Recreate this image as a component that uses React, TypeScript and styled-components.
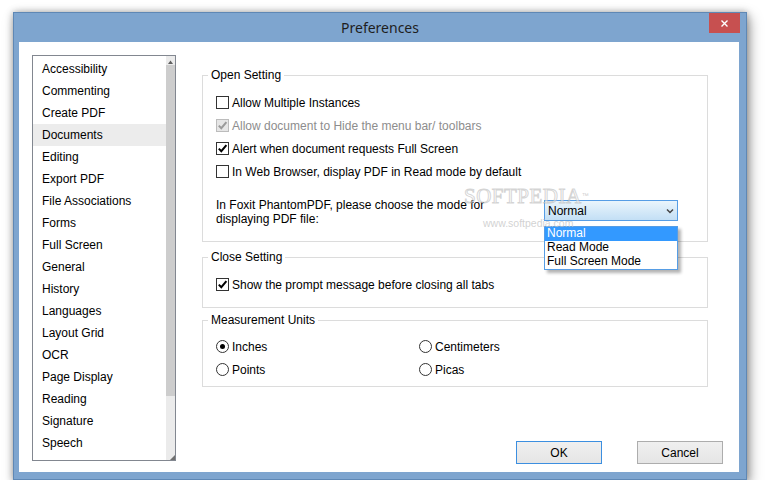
import React from "react";
import styled, { createGlobalStyle } from "styled-components";

const Global = createGlobalStyle`
  html, body { margin: 0; padding: 0; background: #ffffff; }
  body {
    font-family: "Liberation Sans", Arial, sans-serif;
    font-size: 12px;
    color: #000;
  }
  * { box-sizing: border-box; }
`;

const Window = styled.div`
  position: relative;
  margin: 12px 0 0 13px;
  width: 734px;
  height: 468px;
  border: 1px solid #5f88b5;
  background: #7ea5cf;
  padding: 0 7px 7px 5px;
  display: flex;
  flex-direction: column;
  box-shadow: 0 0 7px rgba(0, 0, 0, 0.3), 3px 5px 12px rgba(0, 0, 0, 0.35);
`;

const TitleBar = styled.div`
  position: relative;
  height: 29px;
  margin: 0 -7px 0 -5px;
  display: flex;
  align-items: center;
  justify-content: center;
  font-family: "Noto Sans", "Open Sans", sans-serif;
  font-size: 14px;
  color: #1e1e1e;
`;

const CloseButton = styled.div`
  position: absolute;
  top: 0;
  right: 6px;
  width: 31px;
  height: 20px;
  background: #c75050;
  display: flex;
  align-items: center;
  justify-content: center;
`;

const Client = styled.div`
  position: relative;
  flex: 1;
  background: #ffffff;
  display: grid;
  grid-template-columns: 144px 1fr;
  grid-template-rows: 1fr auto;
  column-gap: 26px;
  padding: 13px 16px 8px 13px;
`;

const ListBox = styled.div`
  grid-row: 1 / 3;
  align-self: start;
  height: 406px;
  border: 1px solid #828790;
  display: flex;
`;

const Items = styled.ul`
  flex: 1;
  margin: 0;
  padding: 2px 0 0;
  list-style: none;
`;

const Item = styled.li<{ $selected?: boolean }>`
  height: 22px;
  line-height: 22px;
  padding-left: 9px;
  white-space: nowrap;
  background: ${(p) => (p.$selected ? "#ececec" : "transparent")};
`;

const ScrollTrack = styled.div`
  width: 9px;
  background: #ebebeb;
  display: flex;
  flex-direction: column;
`;

const ScrollCap = styled.div`
  height: 8px;
  display: flex;
  align-items: flex-end;
  justify-content: center;
`;

const ScrollThumb = styled.div`
  height: 331px;
  margin-top: 1px;
  background: #cdcdcd;
`;

const ScrollGrip = styled.div`
  margin-top: auto;
  height: 8px;
  display: flex;
  align-items: flex-end;
  justify-content: flex-end;
`;

const Panel = styled.div`
  padding-top: 12px;
  display: flex;
  flex-direction: column;
`;

const Group = styled.fieldset<{ $mt?: number }>`
  margin: ${(p) => p.$mt ?? 0}px 0 0 0;
  width: 506px;
  min-width: 0;
  padding: 0;
  border: 1px solid #dcdcdc;
`;

const Legend = styled.legend`
  margin-left: 5px;
  padding: 0 3px;
  line-height: 16px;
  font-size: 12px;
  color: #000;
`;

const GroupBody = styled.div<{ $pt: number; $pb: number }>`
  padding: ${(p) => p.$pt}px 0 ${(p) => p.$pb}px 13px;
  position: relative;
`;

const CheckRow = styled.div<{ $disabled?: boolean }>`
  display: flex;
  align-items: center;
  gap: 3px;
  height: 23px;
  white-space: nowrap;
  color: ${(p) => (p.$disabled ? "#8d8d8d" : "#000")};
`;

const Box = styled.span<{ $disabled?: boolean }>`
  width: 13px;
  height: 13px;
  border: 1px solid ${(p) => (p.$disabled ? "#bcbcbc" : "#333333")};
  background: ${(p) => (p.$disabled ? "#e6e6e6" : "#ffffff")};
  display: flex;
  align-items: center;
  justify-content: center;
  flex: none;
`;

const RadioGrid = styled.div`
  display: grid;
  grid-template-columns: 203px auto;
`;

const Circle = styled.span`
  width: 13px;
  height: 13px;
  border: 1px solid #333333;
  border-radius: 50%;
  background: #ffffff;
  display: flex;
  align-items: center;
  justify-content: center;
  flex: none;
`;

const Dot = styled.span`
  width: 5px;
  height: 5px;
  border-radius: 50%;
  background: #000;
`;

const PromptRow = styled.div`
  display: flex;
  margin-top: 15px;
`;

const PromptText = styled.div`
  width: 328px;
  line-height: 14px;
`;

const SelectWrap = styled.div`
  position: relative;
  width: 134px;
  margin-top: 2px;
`;

const SelectBox = styled.div`
  height: 21px;
  border: 1px solid #569de5;
  background: linear-gradient(#eaf5fc, #c3dff5);
  display: flex;
  align-items: center;
  justify-content: space-between;
  padding: 0 3px 0 3px;
`;

const DropList = styled.ul`
  position: absolute;
  top: 100%;
  left: 0;
  width: 134px;
  margin: 0;
  padding: 0;
  list-style: none;
  background: #ffffff;
  border: 1px solid #569de5;
  box-shadow: 3px 3px 3px rgba(0, 0, 0, 0.3);
  z-index: 2;
`;

const DropItem = styled.li<{ $active?: boolean }>`
  height: 14px;
  line-height: 12px;
  padding-left: 2px;
  white-space: nowrap;
  background: ${(p) => (p.$active ? "#3399ff" : "transparent")};
  color: ${(p) => (p.$active ? "#ffffff" : "#000")};
`;

const ButtonRow = styled.div`
  grid-column: 2;
  display: flex;
  justify-content: flex-end;
  gap: 35px;
`;

const Button = styled.button<{ $default?: boolean }>`
  width: 86px;
  height: 23px;
  padding: 0;
  border: 1px solid ${(p) => (p.$default ? "#3c8fe0" : "#adadad")};
  background: linear-gradient(#f0f0f0, #e5e5e5);
  font-family: "Liberation Sans", Arial, sans-serif;
  font-size: 12px;
  color: #000;
`;

const Watermark = styled.div`
  position: absolute;
  left: 445px;
  top: 143px;
  pointer-events: none;
  z-index: 3;
  display: flex;
  flex-direction: column;
`;

const WmBig = styled.div`
  font-family: "Liberation Serif", serif;
  font-size: 21px;
  line-height: 22px;
  letter-spacing: 0.5px;
  color: rgba(255, 255, 255, 0.5);
  -webkit-text-stroke: 1px rgba(170, 170, 170, 0.5);
`;

const WmTm = styled.sup`
  font-family: "Liberation Sans", sans-serif;
  font-size: 7px;
  color: rgba(170, 170, 170, 0.6);
  -webkit-text-stroke: 0;
  vertical-align: top;
`;

const WmSmall = styled.div`
  margin: 10px 0 0 19px;
  font-family: "Liberation Sans", sans-serif;
  font-size: 10.5px;
  line-height: 12px;
  color: rgba(195, 195, 195, 0.75);
`;

const Check = ({ disabled }: { disabled?: boolean }) => (
  <svg width="11" height="11" viewBox="0 0 11 11">
    <path
      d="M1.8 5.6 L4.3 8.2 L9.4 2.2"
      fill="none"
      stroke={disabled ? "#9a9a9a" : "#000"}
      strokeWidth="2"
    />
  </svg>
);

const CheckItem = ({ label, checked, disabled }: { label: string; checked?: boolean; disabled?: boolean }) => (
  <CheckRow $disabled={disabled}>
    <Box $disabled={disabled}>{checked && <Check disabled={disabled} />}</Box>
    {label}
  </CheckRow>
);

const RadioItem = ({ label, checked }: { label: string; checked?: boolean }) => (
  <CheckRow>
    <Circle>{checked && <Dot />}</Circle>
    {label}
  </CheckRow>
);

const categories = [
  "Accessibility",
  "Commenting",
  "Create PDF",
  "Documents",
  "Editing",
  "Export PDF",
  "File Associations",
  "Forms",
  "Full Screen",
  "General",
  "History",
  "Languages",
  "Layout Grid",
  "OCR",
  "Page Display",
  "Reading",
  "Signature",
  "Speech",
];

export default function App() {
  return (
    <>
      <Global />
      <Window>
        <TitleBar>
          Preferences
          <CloseButton>
            <svg width="9" height="9" viewBox="0 0 9 9">
              <path d="M1.5 1.5 L7.5 7.5 M7.5 1.5 L1.5 7.5" stroke="#fff" strokeWidth="1.4" />
            </svg>
          </CloseButton>
        </TitleBar>
        <Client>
          <ListBox>
            <Items>
              {categories.map((c) => (
                <Item key={c} $selected={c === "Documents"}>
                  {c}
                </Item>
              ))}
            </Items>
            <ScrollTrack>
              <ScrollCap>
                <svg width="5" height="4" viewBox="0 0 5 4">
                  <path d="M0 4 L2.5 0.5 L5 4 Z" fill="#606060" />
                </svg>
              </ScrollCap>
              <ScrollThumb />
              <ScrollGrip>
                <svg width="5" height="5" viewBox="0 0 5 5">
                  <path d="M5 0 L5 5 L0 5 Z" fill="#707070" />
                </svg>
              </ScrollGrip>
            </ScrollTrack>
          </ListBox>

          <Panel>
            <Group>
              <Legend>Open Setting</Legend>
              <GroupBody $pt={8} $pb={15}>
                <CheckItem label="Allow Multiple Instances" />
                <CheckItem label="Allow document to Hide the menu bar/ toolbars" checked disabled />
                <CheckItem label="Alert when document requests Full Screen" checked />
                <CheckItem label="In Web Browser, display PDF in Read mode by default" />
                <PromptRow>
                  <PromptText>
                    In Foxit PhantomPDF, please choose the mode for
                    <br />
                    displaying PDF file:
                  </PromptText>
                  <SelectWrap>
                    <SelectBox>
                      <span>Normal</span>
                      <svg width="8" height="6" viewBox="0 0 8 6">
                        <path d="M1 1.5 L4 4.5 L7 1.5" fill="none" stroke="#444" strokeWidth="1.5" />
                      </svg>
                    </SelectBox>
                    <DropList>
                      <DropItem $active>Normal</DropItem>
                      <DropItem>Read Mode</DropItem>
                      <DropItem>Full Screen Mode</DropItem>
                    </DropList>
                  </SelectWrap>
                </PromptRow>
              </GroupBody>
            </Group>

            <Group $mt={7}>
              <Legend>Close Setting</Legend>
              <GroupBody $pt={8} $pb={11}>
                <CheckItem label="Show the prompt message before closing all tabs" checked />
              </GroupBody>
            </Group>

            <Group $mt={4}>
              <Legend>Measurement Units</Legend>
              <GroupBody $pt={7} $pb={5}>
                <RadioGrid>
                  <RadioItem label="Inches" checked />
                  <RadioItem label="Centimeters" />
                  <RadioItem label="Points" />
                  <RadioItem label="Picas" />
                </RadioGrid>
              </GroupBody>
            </Group>
          </Panel>

          <ButtonRow>
            <Button $default>OK</Button>
            <Button>Cancel</Button>
          </ButtonRow>

          <Watermark>
            <WmBig>
              SOFTPEDIA<WmTm>™</WmTm>
            </WmBig>
            <WmSmall>www.softpedia.com</WmSmall>
          </Watermark>
        </Client>
      </Window>
    </>
  );
}
